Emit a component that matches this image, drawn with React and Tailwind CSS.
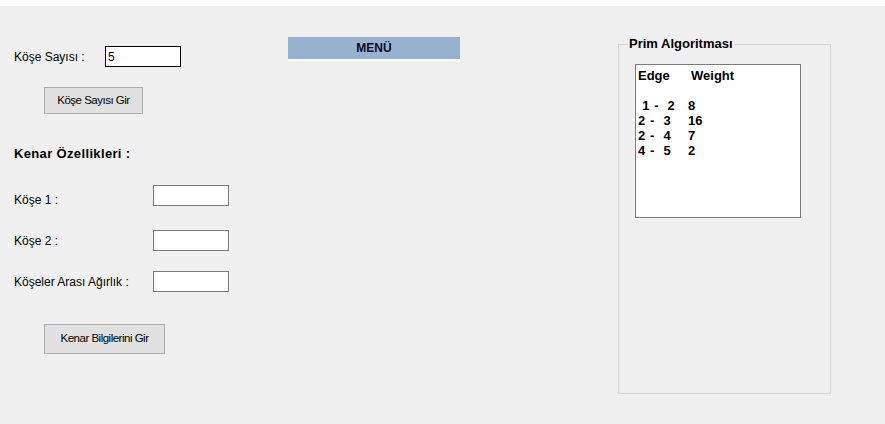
import React from "react";

const font = { fontFamily: '"Liberation Sans", Arial, sans-serif' };

const Field = ({ label, labelWidth, value = "", focused = false, className = "", labelClass = "" }) => (
  <div className={`flex items-center ${className}`}>
    <span className={`text-[12px] text-black ${labelClass}`} style={{ width: labelWidth }}>
      {label}
    </span>
    <input
      readOnly
      value={value}
      className={`h-[21px] w-[76px] bg-white px-[2px] text-[12px] text-black outline-none ${
        focused ? "border border-black" : "border border-[#7a7a7a]"
      }`}
    />
  </div>
);

const WinButton = ({ children, className = "" }) => (
  <button className={`border border-[#adadad] bg-[#e1e1e1] text-[11.5px] tracking-[-0.5px] text-black ${className}`}>
    {children}
  </button>
);

const rows = [
  [" 1 -  2", "8"],
  ["2 -  3", "16"],
  ["2 -  4", "7"],
  ["4 -  5", "2"],
];

export default function App() {
  return (
    <div className="h-[424px] w-[885px] overflow-hidden bg-[#f0f0f0]" style={font}>
      <div className="h-[6px] bg-white" />

      <div className="flex items-start">
        {/* sol form */}
        <div className="w-[274px] flex-none pl-[14px]">
          <Field label="Köşe Sayısı :" labelWidth={91} value="5" focused className="mt-[40px]" />
          <WinButton className="ml-[30px] mt-[20px] h-[27px] w-[99px]">Köşe Sayısı Gir</WinButton>

          <div className="mt-[32px] h-[16px] text-[13px] font-bold leading-[16px] tracking-[0.35px] text-black">
            Kenar Özellikleri :
          </div>

          <Field label="Köşe 1 :" labelWidth={139} labelClass="translate-y-[4px]" className="mt-[23px]" />
          <Field label="Köşe 2 :" labelWidth={139} className="mt-[24px]" />
          <Field label="Köşeler Arası Ağırlık :" labelWidth={139} className="mt-[20px]" />

          <WinButton className="ml-[30px] mt-[32px] h-[30px] w-[121px]">Kenar Bilgilerini Gir</WinButton>
        </div>

        {/* menü */}
        <div className="ml-[14px] mt-[31px] w-[172px] flex-none border-b-2 border-white">
          <div className="flex h-[22px] items-center justify-center bg-[#97b3d0] text-[12px] font-bold text-[#0a0a1e]">
            MENÜ
          </div>
        </div>

        {/* prim algoritması */}
        <fieldset className="ml-[158px] mt-[30px] h-[358px] w-[213px] flex-none border border-[#d5d5d5] pl-[9px]">
          <legend className="px-[1px] text-[13px] font-bold leading-[16px] text-black">Prim Algoritması</legend>
          <div className="ml-[7px] mt-[12px] h-[154px] w-[166px] border border-[#7a7a7a] bg-white pl-[2px] pt-[3px] text-[13px] font-bold leading-[15px] text-black">
            <div className="flex whitespace-pre">
              <span className="w-[53px]">Edge</span>
              <span>Weight</span>
            </div>
            <div className="h-[15px]" />
            {rows.map(([edge, w]) => (
              <div key={edge} className="flex whitespace-pre">
                <span className="w-[50px] tracking-[0.6px]">{edge}</span>
                <span>{w}</span>
              </div>
            ))}
          </div>
        </fieldset>
      </div>
    </div>
  );
}
